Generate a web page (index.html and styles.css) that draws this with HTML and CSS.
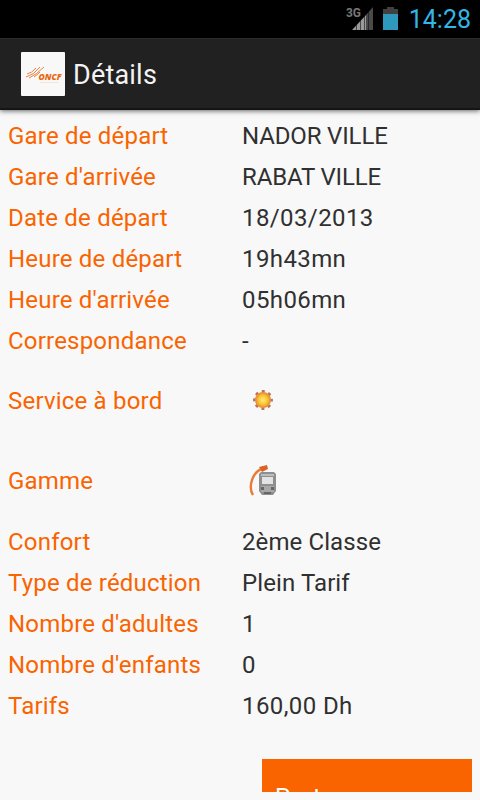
FILE: index.html
```html
<!DOCTYPE html>
<html lang="fr">
<head>
  <meta charset="UTF-8">
  <meta name="viewport" content="width=device-width, initial-scale=1.0">
  <title>Détails</title>
  <link rel="stylesheet" href="styles.css">
</head>
<body>
  <!-- Barre de statut -->
  <div class="status-bar">
    <svg class="signal" width="30" height="26" viewBox="0 0 30 26">
      <text class="network" x="0" y="11" textLength="15" lengthAdjust="spacingAndGlyphs">3G</text>
      <path fill="#9a9a9a" d="M6 24L20 9V24Z"/>
      <path fill="#4a4a4a" d="M20 9L27 1V24H20Z"/>
      <path stroke="#111" stroke-opacity="0.6" d="M10.5 18V24M14.5 14V24M18.5 10V24M22.5 6V24"/>
    </svg>
    <svg class="battery" width="15" height="24" viewBox="0 0 15 24">
      <path fill="#414141" d="M4 0H11V2H15V7H0V2H4Z"/>
      <path fill="#2f98bd" d="M0 7H15V23H0Z"/>
    </svg>
    <span class="clock">14:28</span>
  </div>

  <!-- Barre de titre -->
  <header class="action-bar">
    <svg class="logo" width="44" height="44" viewBox="0 0 44 44">
      <rect width="44" height="44" rx="1" fill="#f8f8f8"/>
      <g fill="none" stroke="#ee8140" stroke-width="1">
        <path d="M6 22Q11 21 15 16"/>
        <path d="M5 25Q13 23 19 15"/>
        <path d="M8 26Q15 23 23 15"/>
        <path d="M13 25Q16 23 19 20"/>
      </g>
      <text class="logo-text" x="17.5" y="28" textLength="23" lengthAdjust="spacingAndGlyphs">ONCF</text>
      <path stroke="#f7ddc9" stroke-width="0.8" d="M19 30.5H38"/>
    </svg>
    <h1>Détails</h1>
  </header>

  <main class="content">
    <dl class="details">
      <div class="row"><dt>Gare de départ</dt><dd class="station">NADOR VILLE</dd></div>
      <div class="row"><dt>Gare d'arrivée</dt><dd class="station">RABAT VILLE</dd></div>
      <div class="row"><dt>Date de départ</dt><dd class="time">18/03/2013</dd></div>
      <div class="row"><dt>Heure de départ</dt><dd class="time">19h43mn</dd></div>
      <div class="row"><dt>Heure d'arrivée</dt><dd class="time">05h06mn</dd></div>
      <div class="row"><dt>Correspondance</dt><dd>-</dd></div>
      <div class="row row-icon">
        <dt>Service à bord</dt>
        <dd>
          <svg width="42" height="42" viewBox="0 0 42 42">
            <defs>
              <radialGradient id="soleil">
                <stop offset="0" stop-color="#fff06a"/>
                <stop offset="0.55" stop-color="#fbc53a"/>
                <stop offset="1" stop-color="#e5862c"/>
              </radialGradient>
            </defs>
            <circle cx="21" cy="20" r="8.6" fill="none" stroke="#b8705a" stroke-width="2.6" stroke-dasharray="3 3.754" stroke-dashoffset="1.5"/>
            <circle cx="21" cy="20" r="8" fill="url(#soleil)"/>
          </svg>
        </dd>
      </div>
      <div class="row row-icon">
        <dt>Gamme</dt>
        <dd>
          <svg width="42" height="42" viewBox="0 0 42 42">
            <path fill="none" stroke="#e77b3a" stroke-width="2.4" d="M11 35C6 27 10 11 22 8"/>
            <path fill="#d96224" d="M17 7L25 5L26 9L20 12Z"/>
            <path fill="#8f8f8f" d="M19 12H32L34 14V31L31 35H20L17 31V14Z"/>
            <rect x="19" y="14" width="13" height="2" fill="#bdbdbd"/>
            <rect x="20" y="17" width="11" height="7" fill="#e1e3e4"/>
            <rect x="19" y="26" width="13" height="6" fill="#a8a8a8"/>
            <path fill="#666" d="M19 27H22V30H19ZM29 27H32V30H29ZM22 32H29V34H22Z"/>
          </svg>
        </dd>
      </div>
      <div class="row"><dt>Confort</dt><dd>2ème Classe</dd></div>
      <div class="row"><dt>Type de réduction</dt><dd>Plein Tarif</dd></div>
      <div class="row"><dt>Nombre d'adultes</dt><dd>1</dd></div>
      <div class="row"><dt>Nombre d'enfants</dt><dd>0</dd></div>
      <div class="row"><dt>Tarifs</dt><dd class="time">160,00 Dh</dd></div>
    </dl>
    <button class="share-btn" type="button">Partager</button>
  </main>
</body>
</html>
```

FILE: styles.css
```css
* {
  margin: 0;
  padding: 0;
  box-sizing: border-box;
}

body {
  font-family: Roboto, sans-serif;
  background-color: #f8f8f8;
  display: flex;
  flex-direction: column;
  height: 100vh;
  overflow: hidden;
}

/* Barre de statut */
.status-bar {
  flex: none;
  height: 38px;
  background-color: #000;
  display: flex;
  align-items: center;
  justify-content: flex-end;
  padding-right: 9px;
}

.signal {
  margin-right: 7px;
}

.network {
  font-size: 12px;
  font-weight: bold;
  fill: #777;
}

.battery {
  margin-right: 11px;
}

.clock {
  color: #33b5e5;
  font-size: 25px;
  line-height: 38px;
  padding-top: 2px;
}

/* Barre de titre */
.action-bar {
  flex: none;
  height: 72px;
  background-color: #212121;
  border-top: 1px solid #2b2b2b;
  border-bottom: 2px solid #141414;
  box-shadow: 0 1px 5px rgba(0, 0, 0, 0.6);
  display: flex;
  align-items: center;
  padding-left: 21px;
  gap: 8px;
}

.logo-text {
  font-family: "Open Sans", sans-serif;
  font-size: 8px;
  font-weight: 800;
  font-style: italic;
  fill: #e8690f;
}

.action-bar h1 {
  color: #f3f3f3;
  font-size: 27px;
  font-weight: normal;
  letter-spacing: 0.2px;
  padding-top: 2px;
}

/* Contenu */
.content {
  flex: 1;
  min-height: 0;
  margin: 0 8px 8px;
  padding-top: 5px;
  overflow: hidden;
}

.row {
  display: grid;
  grid-template-columns: 234px 1fr;
  align-items: center;
  height: 41px;
  font-size: 24px;
}

.row-icon {
  height: 80px;
}

.row dt {
  color: #f96400;
  letter-spacing: 0.2px;
}

.row dd {
  color: #303030;
  letter-spacing: 0.1px;
}

.row .station {
  letter-spacing: -0.15px;
}

.row .time {
  letter-spacing: 0.4px;
}

.row svg {
  display: block;
}

.share-btn {
  display: block;
  width: 210px;
  height: 76px;
  margin: 33px 0 0 auto;
  padding-left: 13px;
  border: none;
  background-color: #f96400;
  color: #fff;
  font-family: inherit;
  font-size: 24px;
  letter-spacing: 0.4px;
  text-align: left;
}
```
